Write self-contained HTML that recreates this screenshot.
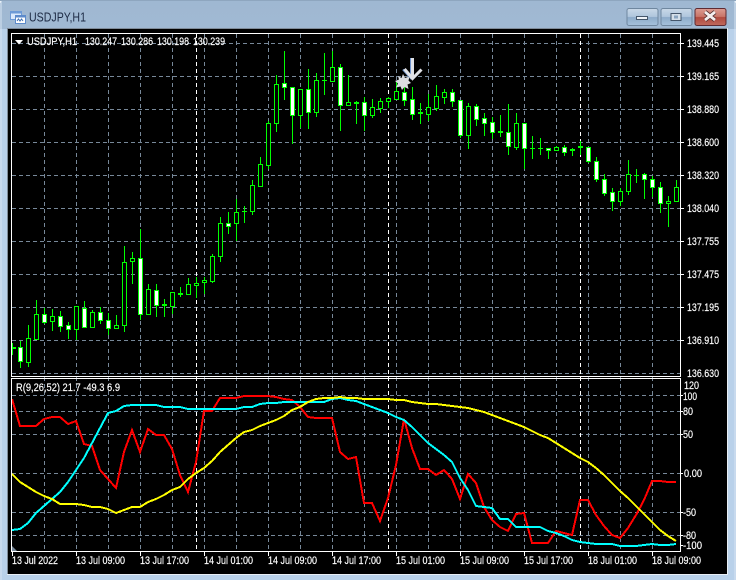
<!DOCTYPE html>
<html>
<head>
<meta charset="utf-8">
<title>USDJPY,H1</title>
<style>
html,body{margin:0;padding:0;background:#fff;width:738px;height:580px;overflow:hidden}
svg{display:block;position:absolute;left:0;top:0}
text{font-family:"Liberation Sans",sans-serif;font-size:11px;fill:#fff;stroke:#fff;stroke-width:.18px}
</style>
</head>
<body>
<svg width="738" height="580" viewBox="0 0 738 580" xmlns="http://www.w3.org/2000/svg">
<defs>
<linearGradient id="tb" x1="0" y1="0" x2="0" y2="1"><stop offset="0" stop-color="#9fb8d2"/><stop offset="1" stop-color="#b9d1ea"/></linearGradient>
<linearGradient id="btn" x1="0" y1="0" x2="0" y2="1"><stop offset="0" stop-color="#c9d8e8"/><stop offset=".48" stop-color="#afc6dd"/><stop offset=".52" stop-color="#8dabc9"/><stop offset="1" stop-color="#a6c2dc"/></linearGradient>
<linearGradient id="cls" x1="0" y1="0" x2="0" y2="1"><stop offset="0" stop-color="#dc9c92"/><stop offset=".48" stop-color="#c97568"/><stop offset=".52" stop-color="#b14a3e"/><stop offset="1" stop-color="#bf6a5d"/></linearGradient>
</defs>

<!-- window frame -->
<path d="M3 0H733L736 3V580H0V3Z" fill="url(#tb)"/>
<rect x="0" y="29" width="736" height="551" fill="#b9d1ea"/>
<rect x="0" y="0" width="736" height="1" fill="#8ea6bf"/>
<rect x="0.5" y="1" width="1" height="579" fill="#d6e4f2"/>
<rect x="734.5" y="1" width="1" height="579" fill="#d6e4f2"/>
<rect x="7" y="28" width="721" height="547" fill="#e8eef5"/>
<rect x="7" y="28" width="1" height="546" fill="#7f8b99"/>
<rect x="7" y="28" width="720" height="1" fill="#7f8b99"/>

<!-- title bar -->
<g>
<rect x="10.5" y="11.5" width="11" height="8" fill="#dbe9fb" stroke="#6d9ad6"/>
<rect x="10.5" y="11.5" width="11" height="2" fill="#6d9ad6"/>
<rect x="15.5" y="15.5" width="10" height="8" fill="#fff" stroke="#5d8bcb"/>
<rect x="15.5" y="15.5" width="10" height="2" fill="#5d8bcb"/>
<path d="M17 21l1.5-2 1.5 2 1.5-2 1.5 2" fill="none" stroke="#3f6fb2"/>
</g>
<text x="29" y="21.5" textLength="57" lengthAdjust="spacingAndGlyphs" style="font-size:12.5px;fill:#1d2a44;stroke:none">USDJPY,H1</text>

<!-- buttons -->
<rect x="627" y="8.5" width="31" height="17" rx="2" fill="url(#btn)" stroke="#6f879f"/>
<rect x="636.5" y="16.5" width="11" height="3" fill="#eef3f8" stroke="#44566b"/>
<rect x="661" y="8.5" width="31" height="17" rx="2" fill="url(#btn)" stroke="#6f879f"/>
<rect x="671" y="13.5" width="10" height="7" fill="#d5e0ea" stroke="#44566b"/>
<rect x="674" y="15.5" width="4" height="3" fill="#8aa5c0"/>
<rect x="695" y="8.5" width="31" height="17" rx="2" fill="url(#cls)" stroke="#5e2b33"/>
<path d="M705 12l10 8M715 12l-10 8" stroke="#54302f" stroke-width="4.5"/>
<path d="M705 12l10 8M715 12l-10 8" stroke="#f4eeee" stroke-width="2.8"/>

<!-- chart background -->
<rect x="8" y="29" width="719" height="545" fill="#000"/>

<!-- grid -->
<g shape-rendering="crispEdges" fill="none">
<path stroke="#778899" stroke-dasharray="4 3" d="M12 43.5H680M12 76.5H680M12 109.5H680M12 142.5H680M12 175.5H680M12 208.5H680M12 241.5H680M12 274.5H680M12 307.5H680M12 340.5H680M12 373.5H680M12 395.5H680M12 411.5H680M12 434.5H680M12 473.5H680M12 512.5H680M12 535.5H680"/>
<path stroke="#778899" stroke-dasharray="4 3" d="M44.5 34V551M76.5 34V551M108.5 34V551M140.5 34V551M172.5 34V551M204.5 34V551M236.5 34V551M268.5 34V551M300.5 34V551M332.5 34V551M364.5 34V551M396.5 34V551M428.5 34V551M460.5 34V551M492.5 34V551M524.5 34V551M556.5 34V551M588.5 34V551M620.5 34V551M652.5 34V551"/>
<path stroke="#fff" stroke-dasharray="4 3" d="M196.5 34V551M388.5 34V551M580.5 34V551"/>
</g>

<!-- candles -->
<g shape-rendering="crispEdges" stroke="#00ff00" fill="none">
<path d="M12.5 343V355M20.5 341V368M28.5 325V367M36.5 300V339M44.5 308V324M52.5 309V331M60.5 311V332M68.5 322V339M76.5 306V340M84.5 301V327M92.5 310V328M100.5 307V324M108.5 313V335M116.5 315V328M124.5 246V332M132.5 252V284M140.5 229V320M148.5 284V314M156.5 284V317M164.5 299V317M172.5 292V314M180.5 287V297M188.5 278V294M196.5 277V298M204.5 277V294M212.5 254V283M220.5 217V262M228.5 212V234M236.5 199V241M244.5 206V223M252.5 180V215M260.5 157V187M268.5 121V169M276.5 75V132M284.5 51V100M292.5 87V144M300.5 89V128M308.5 69V129M316.5 73V117M324.5 53V95M332.5 51V81M340.5 64V131M348.5 75V105M356.5 101V124M364.5 97V131M372.5 99V118M380.5 98V113M388.5 97V108M396.5 81V99M404.5 87V106M412.5 87V120M420.5 103V124M428.5 94V121M436.5 85V111M444.5 89V104M452.5 89V107M460.5 100V138M468.5 103V149M476.5 104V126M484.5 113V136M492.5 117V139M500.5 115V137M508.5 104V155M516.5 113V150M524.5 123V169M532.5 136V159M540.5 138V155M548.5 148V159M556.5 146V151M564.5 145V156M572.5 148V156M580.5 141V155M588.5 147V163M596.5 157V182M604.5 174V196M612.5 188V211M620.5 188V206M628.5 160V195M636.5 169V183M644.5 173V199M652.5 176V197M660.5 182V213M668.5 196V227M676.5 180V202"/>
<!-- hollow bodies -->
<path fill="#000" d="M26.5 338.5h4v24h-4zM34.5 314.5h4v25h-4zM50.5 316.5h4v5h-4zM74.5 306.5h4v23h-4zM90.5 312.5h4v15h-4zM114.5 325.5h4v3h-4zM122.5 262.5h4v63h-4zM130.5 258.5h4v3h-4zM146.5 289.5h4v25h-4zM170.5 292.5h4v14h-4zM186.5 284.5h4v10h-4zM194.5 283.5h4v2h-4zM202.5 280.5h4v2h-4zM210.5 256.5h4v25h-4zM218.5 223.5h4v33h-4zM234.5 212.5h4v11h-4zM250.5 185.5h4v26h-4zM258.5 164.5h4v22h-4zM266.5 123.5h4v42h-4zM274.5 84.5h4v39h-4zM298.5 89.5h4v26h-4zM314.5 80.5h4v32h-4zM330.5 67.5h4v14h-4zM346.5 102.5h4v3h-4zM370.5 107.5h4v8h-4zM378.5 101.5h4v7h-4zM386.5 98.5h4v3h-4zM394.5 91.5h4v8h-4zM426.5 107.5h4v7h-4zM434.5 96.5h4v12h-4zM442.5 92.5h4v5h-4zM466.5 106.5h4v29h-4zM514.5 123.5h4v24h-4zM554.5 147.5h4v3h-4zM618.5 191.5h4v10h-4zM626.5 174.5h4v17h-4zM666.5 201.5h4v2h-4zM674.5 187.5h4v14h-4z"/>
<!-- white bodies -->
<path fill="#fff" d="M18.5 347.5h4v14h-4zM42.5 314.5h4v8h-4zM58.5 316.5h4v10h-4zM66.5 325.5h4v4h-4zM82.5 308.5h4v19h-4zM98.5 312.5h4v8h-4zM106.5 320.5h4v8h-4zM138.5 258.5h4v56h-4zM154.5 290.5h4v15h-4zM226.5 223.5h4v3h-4zM282.5 83.5h4v4h-4zM290.5 87.5h4v28h-4zM306.5 89.5h4v23h-4zM338.5 67.5h4v38h-4zM362.5 102.5h4v13h-4zM402.5 92.5h4v8h-4zM410.5 99.5h4v15h-4zM450.5 92.5h4v9h-4zM458.5 100.5h4v35h-4zM474.5 106.5h4v13h-4zM482.5 118.5h4v5h-4zM490.5 122.5h4v10h-4zM506.5 132.5h4v14h-4zM522.5 123.5h4v25h-4zM546.5 148.5h4v2h-4zM562.5 147.5h4v5h-4zM586.5 147.5h4v14h-4zM594.5 161.5h4v18h-4zM602.5 179.5h4v14h-4zM610.5 192.5h4v9h-4zM642.5 174.5h4v5h-4zM650.5 179.5h4v8h-4zM658.5 187.5h4v16h-4z"/>
<!-- doji -->
<path stroke-width="2" d="M12 348h4M162 305h5M178 294h5M354 103h5M418 113h5M498 132h5M570 150h5M578 147h5"/>
<path d="M242 211.5h5M322 80.5h5M530 148.5h5M538 148.5h5M634 175.5h5"/>
</g>

<!-- star + arrow -->
<polygon points="403,74 405,78 409.5,76.5 408.5,80.5 411,83 407.5,84.5 408.5,89 404.5,87 402,90 400.5,86.5 396,87.5 398,83.5 395,81 399,79.5 398,76 401.5,78" fill="#dcdee3"/>
<path d="M411 58V76" fill="none" stroke="#6f93cc" stroke-width="2"/>
<path d="M403 69.5L411.5 79" fill="none" stroke="#6f93cc" stroke-width="2"/>
<path d="M412.5 58V78M404.5 69L412.5 78.5L421.5 69.5" fill="none" stroke="#e1e3e8" stroke-width="3"/>

<!-- indicator lines -->
<g fill="none" stroke-width="2" shape-rendering="crispEdges">
<polyline stroke="#ff0000" points="12,399 20,426 28,426 36,426 44,419 52,417 60,417 68,424 76,421 84,444 92,446 100,470 108,479 116,488 124,452 132,430 140,452 148,429 156,435 164,435 172,449 180,475 188,492 196,462 204,411 212,411 220,398 228,398 236,398 244,396 252,396 260,396 268,396 276,397 284,399 292,400 300,407 308,417 316,418 324,418 332,418 340,452 348,459 356,457 364,503 372,503 380,521 388,498 396,465 404,419 412,448 420,469 428,469 436,475 444,470 452,479 460,499 468,474 476,483 484,507 492,520 500,527 508,531 516,514 524,513 532,543 540,543 548,543 556,531 564,533 572,535 580,500 588,500 596,515 604,526 612,535 620,538 628,528 636,515 644,500 652,481 660,481 668,482 676,482"/>
<polyline stroke="#00ffff" points="12,530 20,529 28,523 36,513 44,506 52,499 60,492 68,482 76,470 84,458 92,443 100,428 108,413 116,411 124,406 132,405 140,405 148,405 156,405 164,407 172,407 180,407 188,409 196,409 204,409 212,409 220,409 228,409 236,409 244,407 252,407 260,404 268,403 276,403 284,402 292,402 300,402 308,402 316,402 324,402 332,399 340,398 348,400 356,401 364,404 372,407 380,410 388,413 396,417 404,420 412,427 420,435 428,443 436,449 444,455 452,462 460,478 468,490 476,506 484,507 492,508 500,519 508,519 516,527 524,527 532,527 540,527 548,531 556,533 564,536 572,540 580,542 588,543 596,544 604,544 612,544 620,546 628,546 636,546 644,545 652,544 660,545 668,545 676,544"/>
<polyline stroke="#ffff00" points="12,474 20,482 28,487 36,492 44,496 52,499 60,504 68,504 76,504 84,505 92,507 100,507 108,509 116,513 124,510 132,507 140,507 148,502 156,499 164,495 172,490 180,487 188,479 196,473 204,468 212,461 220,452 228,445 236,438 244,432 252,430 260,426 268,423 276,420 284,416 292,410 300,407 308,402 316,399 324,398 332,398 340,397 348,398 356,398 364,399 372,399 380,399 388,399 396,400 404,400 412,402 420,403 428,404 436,404 444,405 452,406 460,407 468,408 476,410 484,412 492,415 500,418 508,421 516,424 524,427 532,431 540,435 548,438 556,443 564,448 572,453 580,458 588,462 596,468 604,475 612,483 620,491 628,498 636,506 644,514 652,522 660,530 668,536 676,541"/>
</g>

<!-- panel borders and ticks -->
<g shape-rendering="crispEdges" fill="none" stroke="#fff">
<path d="M11.5 33.5H680.5V376.5H11.5ZM11.5 378.5H680.5V551.5H11.5Z"/>
<path d="M681 43.5h3M681 76.5h3M681 109.5h3M681 142.5h3M681 175.5h3M681 208.5h3M681 241.5h3M681 274.5h3M681 307.5h3M681 340.5h3M681 395.5h2M681 411.5h2M681 434.5h2M681 473.5h2M681 512.5h2M681 535.5h2M681 545.5h2"/>
<path d="M12.5 552v4M76.5 552v4M140.5 552v4M204.5 552v4M268.5 552v4M332.5 552v4M396.5 552v4M460.5 552v4M524.5 552v4M588.5 552v4M652.5 552v4"/>
</g>
<polygon points="15,40 23,40 19,44.5" fill="#fff"/>
<polygon points="12,546 17,551 12,551" fill="#778899"/>

<!-- labels -->
<text x="27" y="45" textLength="50" lengthAdjust="spacingAndGlyphs">USDJPY,H1</text>
<text x="85" y="45" textLength="32" lengthAdjust="spacingAndGlyphs">130.247</text>
<text x="121" y="45" textLength="32" lengthAdjust="spacingAndGlyphs">130.286</text>
<text x="157" y="45" textLength="32" lengthAdjust="spacingAndGlyphs">130.198</text>
<text x="193" y="45" textLength="32" lengthAdjust="spacingAndGlyphs">130.239</text>

<text x="687" y="47" textLength="32" lengthAdjust="spacingAndGlyphs">139.445</text>
<text x="687" y="80" textLength="32" lengthAdjust="spacingAndGlyphs">139.165</text>
<text x="687" y="113" textLength="32" lengthAdjust="spacingAndGlyphs">138.880</text>
<text x="687" y="146" textLength="32" lengthAdjust="spacingAndGlyphs">138.600</text>
<text x="687" y="179" textLength="32" lengthAdjust="spacingAndGlyphs">138.320</text>
<text x="687" y="212" textLength="32" lengthAdjust="spacingAndGlyphs">138.040</text>
<text x="687" y="245" textLength="32" lengthAdjust="spacingAndGlyphs">137.755</text>
<text x="687" y="278" textLength="32" lengthAdjust="spacingAndGlyphs">137.475</text>
<text x="687" y="311" textLength="32" lengthAdjust="spacingAndGlyphs">137.195</text>
<text x="687" y="344" textLength="32" lengthAdjust="spacingAndGlyphs">136.910</text>
<text x="687" y="377" textLength="32" lengthAdjust="spacingAndGlyphs">136.630</text>

<text x="16" y="391" textLength="104" lengthAdjust="spacingAndGlyphs">R(9,26,52) 21.7 -49.3 6.9</text>

<text x="684" y="389" textLength="15" lengthAdjust="spacingAndGlyphs">120</text>
<text x="683" y="400" textLength="14" lengthAdjust="spacingAndGlyphs">100</text>
<text x="683" y="415" textLength="10" lengthAdjust="spacingAndGlyphs">80</text>
<text x="683" y="438" textLength="10" lengthAdjust="spacingAndGlyphs">50</text>
<text x="684" y="477" textLength="18" lengthAdjust="spacingAndGlyphs">0.00</text>
<text x="683" y="516" textLength="13" lengthAdjust="spacingAndGlyphs">-50</text>
<text x="683" y="539" textLength="13" lengthAdjust="spacingAndGlyphs">-80</text>
<text x="683" y="549" textLength="19" lengthAdjust="spacingAndGlyphs">-100</text>

<text x="12" y="564" textLength="46" lengthAdjust="spacingAndGlyphs">13 Jul 2022</text>
<text x="76" y="564" textLength="49" lengthAdjust="spacingAndGlyphs">13 Jul 09:00</text>
<text x="140" y="564" textLength="49" lengthAdjust="spacingAndGlyphs">13 Jul 17:00</text>
<text x="204" y="564" textLength="49" lengthAdjust="spacingAndGlyphs">14 Jul 01:00</text>
<text x="268" y="564" textLength="49" lengthAdjust="spacingAndGlyphs">14 Jul 09:00</text>
<text x="332" y="564" textLength="49" lengthAdjust="spacingAndGlyphs">14 Jul 17:00</text>
<text x="396" y="564" textLength="49" lengthAdjust="spacingAndGlyphs">15 Jul 01:00</text>
<text x="460" y="564" textLength="49" lengthAdjust="spacingAndGlyphs">15 Jul 09:00</text>
<text x="524" y="564" textLength="49" lengthAdjust="spacingAndGlyphs">15 Jul 17:00</text>
<text x="588" y="564" textLength="49" lengthAdjust="spacingAndGlyphs">18 Jul 01:00</text>
<text x="652" y="564" textLength="49" lengthAdjust="spacingAndGlyphs">18 Jul 09:00</text>
</svg>
</body>
</html>
